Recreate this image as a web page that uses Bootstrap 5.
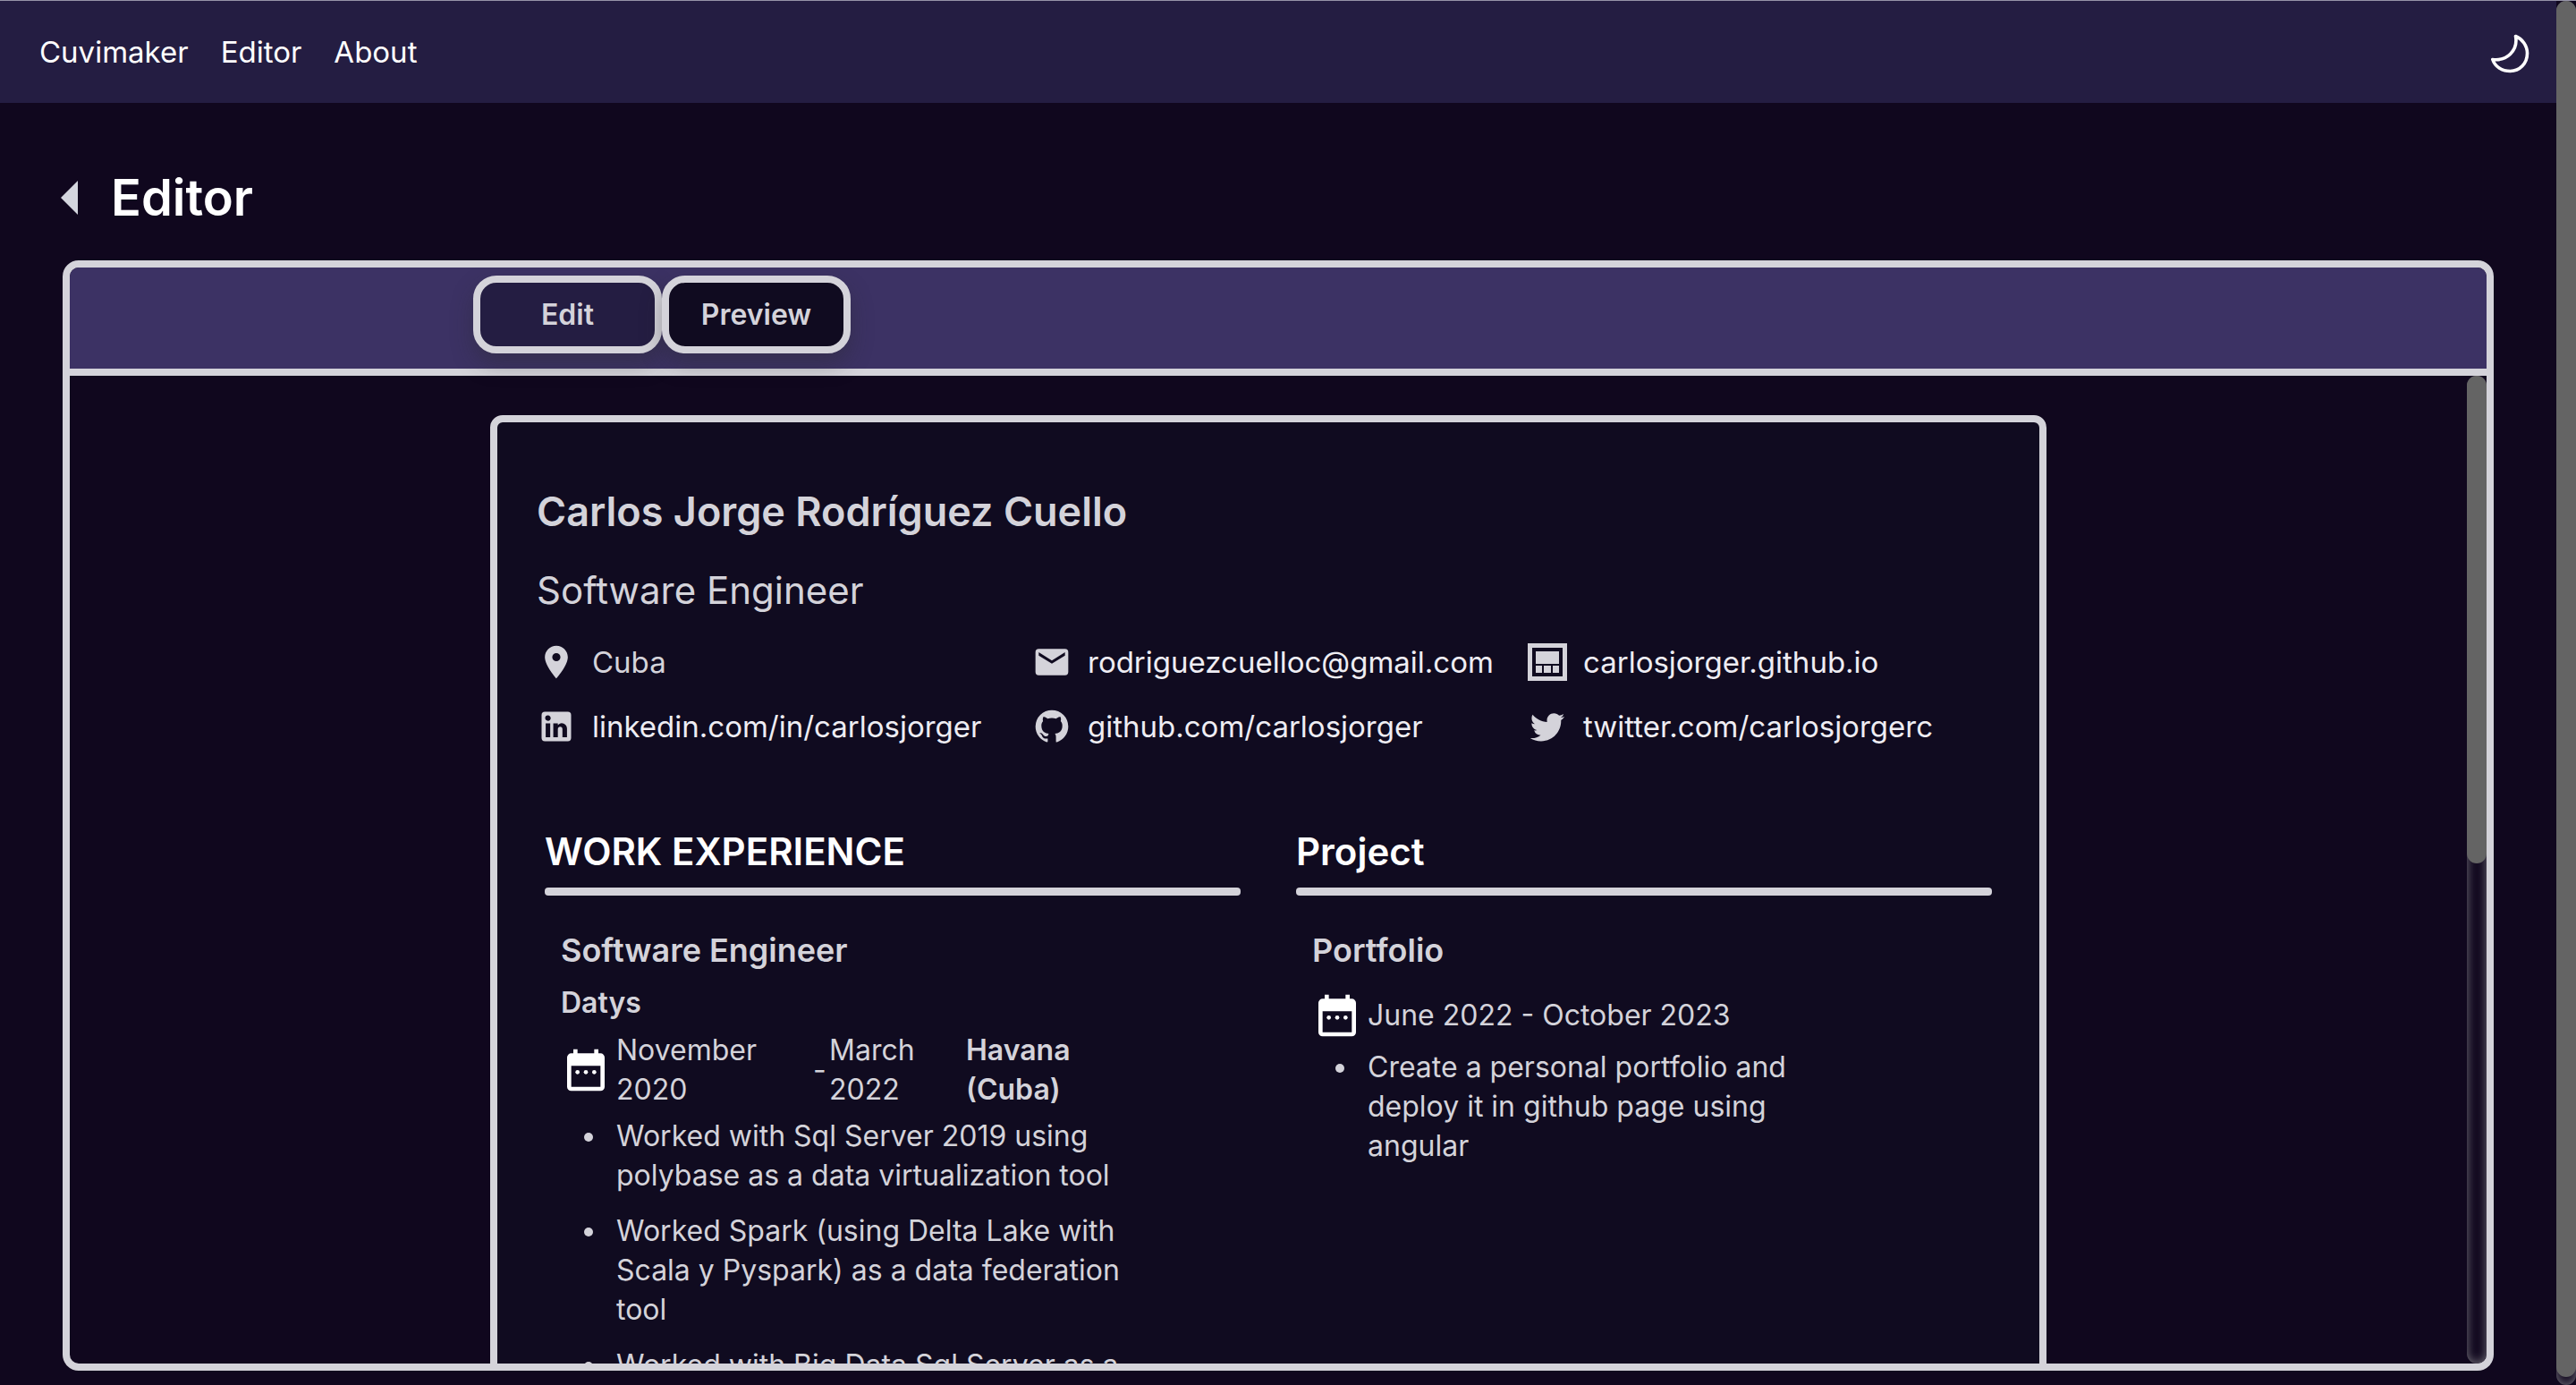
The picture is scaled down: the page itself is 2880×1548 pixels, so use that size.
<!DOCTYPE html>
<html lang="en">
<head>
<meta charset="utf-8">
<meta name="viewport" content="width=device-width, initial-scale=1">
<title>Cuvimaker - Editor</title>
<link href="https://cdn.jsdelivr.net/npm/bootstrap@5.3.0/dist/css/bootstrap.min.css" rel="stylesheet">
<style>
:root{--line:#d4d3da;--ink:#d4d3da;--page:#10071e;--paper:#100b20;--bar:#241d42;--head:#3c3264}
body{font-family:Inter,"Open Sans",sans-serif;font-size:32px;line-height:44px;background:var(--page);color:var(--ink)}
.app-shell{height:100vh;border-top:1px solid #9694a8;overflow:hidden}
.top-bar{background:var(--bar);height:114px;padding:0 28px 0 44px}
.top-bar .nav-link{color:#fff;font-size:33px;padding:0}
.top-links{gap:36px}
.icon-btn{background:none;border:0;padding:0;color:#fff;line-height:0}
.moon{width:48px;height:48px}
.page-head{gap:37px;padding:36px 68px 0;height:176px}
.page-head h1{font-size:56px;line-height:64px;font-weight:600;color:#fff;margin:0}
.panel{border:8px solid var(--line);border-radius:18px;margin:0 70px 16px;overflow:hidden;min-height:0}
.panel-head{background:var(--head);border-bottom:8px solid var(--line);height:121px;padding:9px 0 0 451px}
.tab-btn{width:211px;height:87px;border:8px solid var(--line);border-radius:26px;background:var(--bar);color:var(--ink);font-size:32px;font-weight:600;box-shadow:0 12px 24px rgba(40,40,40,.35);padding:0;position:relative}
.tab-btn.active{background:var(--paper)}
.scroll-track{width:22px;flex:none;border-radius:11px;box-shadow:inset 0 0 12px #77757d}
.scroll-thumb{background:#646464;border-radius:11px}
.panel-track .scroll-thumb{height:49.4%}
.page-track .scroll-thumb{height:99.4%}
.view-area{min-height:0;overflow:hidden}
.view-body{padding-top:44px;overflow:hidden}
.paper{width:100%;max-width:1740px;border:8px solid var(--line);border-radius:14px;background:var(--paper);padding:72px 44px 44px}
.paper h2{font-size:45px;line-height:56px;font-weight:600;margin:0}
.role{font-size:42px;line-height:52px;margin:34px 0 32px}
.contacts{display:grid;grid-template-columns:repeat(3,minmax(0,1fr));column-gap:26px;row-gap:28px}
.contacts>div{gap:18px;white-space:nowrap;font-size:33px}
.contacts a{color:#eeedf3;text-decoration:none}
.contacts svg{width:44px;height:44px;flex:none}
.sections{margin-top:90px;padding:0 9px;display:grid;grid-template-columns:repeat(2,minmax(0,1fr));column-gap:62px}
.sections h3{font-size:42px;line-height:56px;font-weight:600;color:#fff;margin:0 0 12px}
.rule{height:9px;border-radius:4px;background:var(--line)}
.entry{padding:39px 18px 0}
.entry h4{font-size:36px;line-height:44px;font-weight:600;margin:0}
.entry h5{font-size:32px;line-height:44px;font-weight:600;margin:15px 0 9px}
.cal{width:56px;height:56px;color:#fff;flex:none}
.when{gap:6px;margin-top:23px}
.job-when{display:grid;grid-template-columns:56px 214px 12px 147px 130px;column-gap:6px;align-items:center}
.job-when strong{font-weight:600}
.entry ul{list-style:none;margin:8px 0 0;padding-left:26px;max-width:626px}
.entry li{display:flex;gap:26px;margin-bottom:18px}
.entry li::before{content:"";flex:none;width:10px;height:10px;border-radius:50%;background:var(--ink);margin-top:18px}
</style>
<script src="https://cdn.jsdelivr.net/npm/bootstrap@5.3.0/dist/js/bootstrap.bundle.min.js"></script>
</head>
<body>
<svg class="d-none"><symbol id="cal" viewBox="0 0 24 24"><path fill="currentColor" fill-rule="evenodd" d="M19 4h-1V2h-2v2H8V2H6v2H5a2 2 0 0 0-2 2v14a2 2 0 0 0 2 2h14a2 2 0 0 0 2-2V6a2 2 0 0 0-2-2zm0 16H5V10h14v10z"/><g fill="currentColor"><circle cx="8" cy="13" r="1"/><circle cx="12" cy="13" r="1"/><circle cx="16" cy="13" r="1"/></g></symbol></svg>
<div class="app-shell d-flex">
  <div class="flex-grow-1 d-flex flex-column">
    <nav class="top-bar d-flex align-items-center justify-content-between flex-shrink-0">
      <div class="top-links d-flex">
        <a class="nav-link" href="#">Cuvimaker</a>
        <a class="nav-link" href="#">Editor</a>
        <a class="nav-link" href="#">About</a>
      </div>
      <button class="icon-btn" type="button" aria-label="Toggle dark mode">
        <svg class="moon" viewBox="0 0 48 48" fill="none" stroke="#fff" stroke-width="3.600" stroke-linejoin="round"><path d="M30.500 6.500C38 9.500 43.500 17 43.500 25.500C43.500 37 35 45.500 24.500 45.500C15 45.500 7.500 40.500 4.800 32.500C20 34.500 33.500 23 30.500 6.500Z"/></svg>
      </button>
    </nav>
    <header class="page-head d-flex align-items-center flex-shrink-0">
      <button class="icon-btn" type="button" aria-label="Back"><svg width="19" height="40" viewBox="0 0 19 40"><path fill="#d4d6de" d="M19 1v38L0 20z"/></svg></button>
      <h1>Editor</h1>
    </header>
    <main class="panel flex-grow-1 d-flex flex-column">
      <div class="panel-head d-flex align-items-start flex-shrink-0">
        <button class="tab-btn" type="button">Edit</button>
        <button class="tab-btn active" type="button">Preview</button>
      </div>
      <div class="view-area d-flex flex-grow-1">
        <div class="view-body flex-grow-1 d-flex justify-content-center align-items-start">
          <article class="paper">
            <h2>Carlos Jorge Rodríguez Cuello</h2>
            <p class="role">Software Engineer</p>
            <div class="contacts">
              <div class="d-flex align-items-center"><svg viewBox="0 0 24 24" fill="currentColor"><path d="M12 2C8.130 2 5 5.130 5 9c0 5.250 7 13 7 13s7-7.750 7-13c0-3.870-3.130-7-7-7zm0 9.500a2.500 2.500 0 0 1 0-5 2.500 2.500 0 0 1 0 5z"/></svg><span>Cuba</span></div>
              <div class="d-flex align-items-center"><svg viewBox="0 0 24 24" fill="currentColor"><path d="M20 4H4a2 2 0 0 0-2 2v12a2 2 0 0 0 2 2h16a2 2 0 0 0 2-2V6a2 2 0 0 0-2-2zm0 4-8 5-8-5V6l8 5 8-5v2z"/></svg><a href="#">rodriguezcuelloc@gmail.com</a></div>
              <div class="d-flex align-items-center"><svg viewBox="0 0 44 44" fill="currentColor"><path fill-rule="evenodd" d="M0 1h44v42H0zM5 6v32h34V6z"/><path d="M9 10h26v14H9zM9 26h7v8H9zM18 26h8v8h-8zM28 26h7v8h-7z"/></svg><a href="#">carlosjorger.github.io</a></div>
              <div class="d-flex align-items-center"><svg viewBox="0 0 24 24" fill="currentColor"><path d="M19 3a2 2 0 0 1 2 2v14a2 2 0 0 1-2 2H5a2 2 0 0 1-2-2V5a2 2 0 0 1 2-2h14m-.5 15.500v-5.300a3.260 3.260 0 0 0-3.260-3.260c-.85 0-1.840.52-2.320 1.300v-1.110h-2.790v8.370h2.790v-4.930c0-.77.62-1.400 1.390-1.400a1.400 1.400 0 0 1 1.400 1.400v4.930h2.790M6.880 8.560a1.680 1.680 0 0 0 1.680-1.680c0-.93-.75-1.690-1.680-1.690a1.690 1.690 0 0 0-1.690 1.690c0 .93.76 1.680 1.690 1.680m1.390 9.940v-8.370H5.500v8.370h2.770z"/></svg><a href="#">linkedin.com/in/carlosjorger</a></div>
              <div class="d-flex align-items-center"><svg viewBox="0 0 24 24" fill="currentColor"><path d="M12 2A10 10 0 0 0 2 12c0 4.420 2.870 8.170 6.840 9.500.5.080.66-.23.66-.5v-1.690c-2.770.6-3.360-1.340-3.360-1.340-.46-1.160-1.110-1.470-1.110-1.470-.91-.62.07-.6.07-.6 1 .07 1.530 1.030 1.530 1.030.87 1.520 2.340 1.070 2.910.83.090-.65.35-1.090.63-1.340-2.220-.25-4.550-1.110-4.550-4.920 0-1.110.38-2 1.030-2.710-.1-.25-.45-1.290.1-2.640 0 0 .84-.27 2.750 1.020.79-.22 1.650-.33 2.500-.33s1.710.11 2.500.33c1.910-1.290 2.750-1.020 2.750-1.020.55 1.350.2 2.390.1 2.640.65.71 1.030 1.600 1.030 2.710 0 3.820-2.340 4.660-4.570 4.910.36.31.69.92.69 1.850V21c0 .27.16.59.67.5C19.140 20.160 22 16.420 22 12A10 10 0 0 0 12 2z"/></svg><a href="#">github.com/carlosjorger</a></div>
              <div class="d-flex align-items-center"><svg viewBox="0 0 24 24" fill="currentColor"><path d="M22.460 6c-.77.350-1.600.580-2.460.690.880-.530 1.560-1.370 1.880-2.380-.830.500-1.750.850-2.720 1.050C18.370 4.500 17.260 4 16 4c-2.350 0-4.270 1.920-4.270 4.290 0 .340.040.670.110.980C8.280 9.090 5.110 7.380 3 4.790c-.370.630-.580 1.370-.580 2.150 0 1.490.750 2.810 1.910 3.560-.710 0-1.370-.200-1.950-.500v.030c0 2.080 1.480 3.820 3.440 4.210a4.220 4.220 0 0 1-1.930.070 4.280 4.280 0 0 0 4 2.980 8.521 8.521 0 0 1-5.330 1.840c-.340 0-.680-.020-1.020-.060C3.440 20.290 5.700 21 8.120 21 16 21 20.330 14.460 20.330 8.790c0-.190 0-.370-.010-.560.840-.600 1.560-1.360 2.140-2.230z"/></svg><a href="#">twitter.com/carlosjorgerc</a></div>
            </div>
            <div class="sections">
              <section>
                <h3>WORK EXPERIENCE</h3><div class="rule"></div>
                <div class="entry">
                  <h4>Software Engineer</h4>
                  <h5>Datys</h5>
                  <div class="job-when"><svg class="cal"><use href="#cal"/></svg><span>November 2020</span><span>-</span><span>March 2022</span><strong>Havana (Cuba)</strong></div>
                  <ul>
                    <li>Worked with Sql Server 2019 using polybase as a data virtualization tool</li>
                    <li>Worked Spark (using Delta Lake with Scala y Pyspark) as a data federation tool</li>
                    <li>Worked with Big Data Sql Server as a</li>
                  </ul>
                </div>
              </section>
              <section>
                <h3>Project</h3><div class="rule"></div>
                <div class="entry">
                  <h4>Portfolio</h4>
                  <div class="when d-flex align-items-center"><svg class="cal"><use href="#cal"/></svg><span>June 2022 - October 2023</span></div>
                  <ul><li>Create a personal portfolio and deploy it in github page using angular</li></ul>
                </div>
              </section>
            </div>
          </article>
        </div>
        <div class="scroll-track panel-track"><div class="scroll-thumb"></div></div>
      </div>
    </main>
  </div>
  <div class="scroll-track page-track"><div class="scroll-thumb"></div></div>
</div>
</body>
</html>
